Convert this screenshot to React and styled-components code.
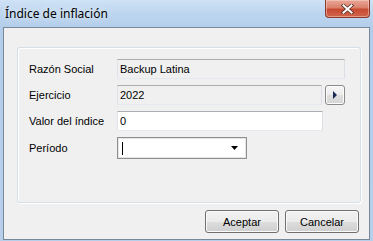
import React from "react";
import styled, { createGlobalStyle } from "styled-components";

const Global = createGlobalStyle`
  html, body { margin: 0; padding: 0; background: #bcd4ee; }
  * { box-sizing: border-box; }
`;

const Window = styled.div`
  width: 373px;
  height: 241px;
  display: flex;
  flex-direction: column;
  background: linear-gradient(to bottom, #cfe2f6 0px, #bcd5ef 14px, #b4cdea 28px, #b7cfeb 241px);
  padding: 0 3px 1px 3px;
  font-family: "Liberation Sans", Arial, sans-serif;
`;

const TitleBar = styled.div`
  height: 27px;
  display: flex;
  align-items: flex-start;
  flex-shrink: 0;
`;

const Title = styled.div`
  font-family: "Noto Sans", "Open Sans", sans-serif;
  font-size: 12px;
  color: #000;
  padding: 5px 0 0 2px;
  text-shadow: 0 0 6px rgba(255, 255, 255, 0.9);
`;

const CloseButton = styled.div`
  margin-left: auto;
  width: 45px;
  height: 18px;
  border: 1px solid #8a3a2c;
  border-top: none;
  border-radius: 0 0 4px 4px;
  background: linear-gradient(to bottom, #e9a898 0%, #da806a 45%, #c74a32 55%, #d0654c 100%);
  box-shadow: inset 0 0 0 1px rgba(255, 220, 210, 0.45);
  display: flex;
  align-items: center;
  justify-content: center;
`;

const Client = styled.div`
  flex: 1;
  display: flex;
  flex-direction: column;
  background: #f0f0f0;
  border: 1px solid #76889a;
  padding: 19px 8px 0 13px;
`;

const GroupBox = styled.div`
  height: 156px;
  border: 1px solid #d5dfe5;
  border-radius: 3px;
  box-shadow: inset 1px 1px 0 #ffffff, 1px 1px 0 #ffffff;
  padding: 11px 15px 0 11px;
`;

const FieldGrid = styled.div`
  display: grid;
  grid-template-columns: 88px 1fr;
  row-gap: 6px;
  align-items: center;
`;

const Label = styled.div`
  font-size: 11px;
  color: #000;
`;

const TextBox = styled.div`
  height: 20px;
  width: ${(p) => p.$width || "100%"};
  border: 1px solid #abadb3;
  border-color: #abadb3 #dbdfe6 #e3e9ef #e2e3ea;
  background: ${(p) => (p.$readOnly ? "#f0f0f0" : "#ffffff")};
  font-size: 11px;
  color: #000;
  display: flex;
  align-items: center;
  padding-left: 2px;
`;

const FieldLine = styled.div`
  display: flex;
  justify-content: space-between;
  align-items: center;
`;

const SmallButton = styled.div`
  width: 20px;
  height: 20px;
  border: 1px solid #8a8a8a;
  border-radius: 3px;
  background: linear-gradient(to bottom, #f6f6f6 0%, #ececec 50%, #dedede 51%, #d6d6d6 100%);
  box-shadow: inset 0 0 0 1px #fcfcfc;
  display: flex;
  align-items: center;
  justify-content: center;
`;

const Combo = styled.div`
  width: 130px;
  height: 22px;
  border: 1px solid #8e8f8f;
  box-shadow: inset 0 0 0 1px #e4e4e4;
  background: #fff;
  display: flex;
  align-items: center;
  padding: 0 8px 0 4px;
`;

const Caret = styled.div`
  width: 1px;
  height: 13px;
  background: #000;
`;

const ButtonRow = styled.div`
  display: flex;
  justify-content: flex-end;
  gap: 6px;
  margin-top: 7px;
  padding-right: 2px;
`;

const DialogButton = styled.div`
  width: 74px;
  height: 23px;
  border: 1px solid #707070;
  border-radius: 3px;
  background: linear-gradient(to bottom, #f2f2f2 0%, #ebebeb 50%, #dddddd 51%, #cfcfcf 100%);
  box-shadow: inset 0 0 0 1px #fbfbfb;
  font-size: 11px;
  color: #000;
  display: flex;
  align-items: center;
  justify-content: center;
`;

export default function App() {
  return (
    <>
      <Global />
      <Window>
        <TitleBar>
          <Title>Índice de inflación</Title>
          <CloseButton>
            <svg width="13" height="10" viewBox="0 0 13 10">
              <path
                d="M2.5 1.5 L10.5 8.5 M10.5 1.5 L2.5 8.5"
                stroke="#5a3028"
                strokeWidth="3.6"
                strokeLinecap="square"
              />
              <path
                d="M2.5 1.5 L10.5 8.5 M10.5 1.5 L2.5 8.5"
                stroke="#ffffff"
                strokeWidth="2"
                strokeLinecap="square"
              />
            </svg>
          </CloseButton>
        </TitleBar>
        <Client>
          <GroupBox>
            <FieldGrid>
              <Label>Razón Social</Label>
              <TextBox $readOnly>Backup Latina</TextBox>

              <Label>Ejercicio</Label>
              <FieldLine>
                <TextBox $readOnly $width="205px">2022</TextBox>
                <SmallButton>
                  <svg width="6" height="8" viewBox="0 0 6 8">
                    <path d="M1 0 L5 4 L1 8 Z" fill="#1b2a55" />
                  </svg>
                </SmallButton>
              </FieldLine>

              <Label>Valor del índice</Label>
              <TextBox $width="206px">0</TextBox>

              <Label>Período</Label>
              <Combo>
                <Caret />
                <svg style={{ marginLeft: "auto" }} width="7" height="4" viewBox="0 0 7 4">
                  <path d="M0 0 L7 0 L3.5 4 Z" fill="#000" />
                </svg>
              </Combo>
            </FieldGrid>
          </GroupBox>
          <ButtonRow>
            <DialogButton>Aceptar</DialogButton>
            <DialogButton>Cancelar</DialogButton>
          </ButtonRow>
        </Client>
      </Window>
    </>
  );
}
